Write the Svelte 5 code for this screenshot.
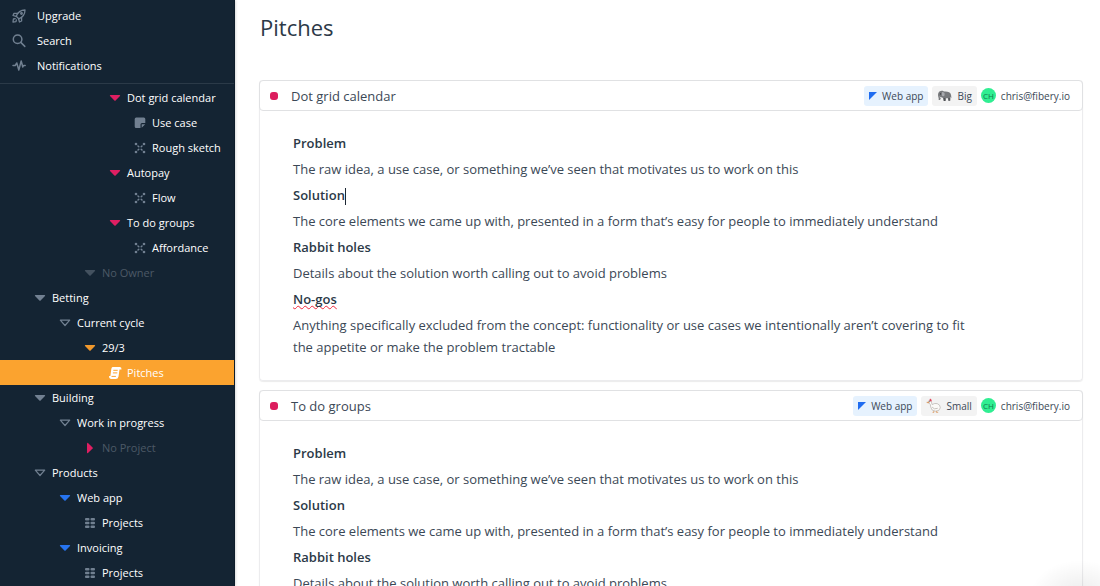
<script>
  const nav = [
    { icon: 'rocket', label: 'Upgrade' },
    { icon: 'search', label: 'Search' },
    { icon: 'pulse', label: 'Notifications' }
  ];

  const tree = [
    { depth: 4, icon: 'down', tone: 'pink', label: 'Dot grid calendar' },
    { depth: 5, icon: 'note', tone: 'grey', label: 'Use case' },
    { depth: 5, icon: 'board', tone: 'grey', label: 'Rough sketch' },
    { depth: 4, icon: 'down', tone: 'pink', label: 'Autopay' },
    { depth: 5, icon: 'board', tone: 'grey', label: 'Flow' },
    { depth: 4, icon: 'down', tone: 'pink', label: 'To do groups' },
    { depth: 5, icon: 'board', tone: 'grey', label: 'Affordance' },
    { depth: 3, icon: 'down', tone: 'dim', label: 'No Owner', muted: true },
    { depth: 1, icon: 'down', tone: 'grey', label: 'Betting' },
    { depth: 2, icon: 'outline', tone: 'grey', label: 'Current cycle' },
    { depth: 3, icon: 'down', tone: 'orange', label: '29/3' },
    { depth: 4, icon: 'scroll', tone: 'white', label: 'Pitches', active: true },
    { depth: 1, icon: 'down', tone: 'grey', label: 'Building' },
    { depth: 2, icon: 'outline', tone: 'grey', label: 'Work in progress' },
    { depth: 3, icon: 'right', tone: 'pink', label: 'No Project', muted: true },
    { depth: 1, icon: 'outline', tone: 'grey', label: 'Products' },
    { depth: 2, icon: 'down', tone: 'blue', label: 'Web app' },
    { depth: 3, icon: 'list', tone: 'grey', label: 'Projects' },
    { depth: 2, icon: 'down', tone: 'blue', label: 'Invoicing' },
    { depth: 3, icon: 'list', tone: 'grey', label: 'Projects' }
  ];

  const sections = [
    ['Problem', 'The raw idea, a use case, or something we’ve seen that motivates us to work on this'],
    ['Solution', 'The core elements we came up with, presented in a form that’s easy for people to immediately understand'],
    ['Rabbit holes', 'Details about the solution worth calling out to avoid problems'],
    ['No-gos', 'Anything specifically excluded from the concept: functionality or use cases we intentionally aren’t covering to fit the appetite or make the problem tractable']
  ];

  const pitches = [
    { title: 'Dot grid calendar', size: 'Big', editing: true },
    { title: 'To do groups', size: 'Small', editing: false }
  ];
</script>

{#snippet glyph(name)}
  <svg class="glyph" viewBox="0 0 14 14" aria-hidden="true">
    {#if name === 'rocket'}
      <g fill="none" stroke="currentColor" stroke-width="1.3" stroke-linejoin="round" stroke-linecap="round">
        <path d="M4.200 7.200C5.600 3.600 8.600 1 13 1c0 4.400-2.600 7.400-6.200 8.800z" />
        <path d="M5.700 4.400H2L1 6.500l3 .9M9.600 8.300V12L7.500 13l-.9-3" />
        <path d="M3.200 9.600 1.400 10 1 13l3-.4.400-1.800" />
        <circle cx="9.500" cy="4.500" r=".8" />
      </g>
    {:else if name === 'search'}
      <g fill="none" stroke="currentColor" stroke-width="1.500" stroke-linecap="round">
        <circle cx="5.600" cy="5.200" r="4.300" />
        <path d="m8.800 8.400 4 4" />
      </g>
    {:else if name === 'pulse'}
      <path d="M1 6.500h2.200l1.600-2.500 2 7 2.400-9 1.600 6 .8-1.500h1.600" fill="none" stroke="currentColor" stroke-width="1.500" stroke-linejoin="round" stroke-linecap="round" />
    {:else if name === 'down'}
      <path d="M2.300 4h9.400q.8.300.3 1L7.600 9.600q-.6.500-1.200 0L2 5q-.5-.7.300-1z" fill="currentColor" />
    {:else if name === 'outline'}
      <path d="M2.300 4.200h9.400L7 9.500z" fill="none" stroke="currentColor" stroke-width="1.200" stroke-linejoin="round" />
    {:else if name === 'right'}
      <path d="M4 2.300q.2-.8 1-.3l4.600 4.400q.5.600 0 1.200L5 12q-.8.500-1-.3z" fill="currentColor" />
    {:else if name === 'note'}
      <path d="M3.200 1.500h7.600A1.500 1.500 0 0 1 12.300 3v4H9A1.500 1.500 0 0 0 7.500 8.500V12H3.200a1.500 1.500 0 0 1-1.500-1.500V3a1.500 1.500 0 0 1 1.500-1.500z" fill="currentColor" />
      <path d="M8.700 8.300h3.500l-3.500 3.500z" fill="currentColor" />
    {:else if name === 'board'}
      <g stroke="currentColor" stroke-width="1.500" stroke-linecap="round">
        <path d="m5 5 .8.800M9 5l-.8.800M5 9l.8-.8M9 9l-.8-.8" />
      </g>
      <g fill="currentColor">
        <circle cx="3" cy="3" r="1.300" /><circle cx="11" cy="3" r="1.300" />
        <circle cx="3" cy="11" r="1.300" /><circle cx="11" cy="11" r="1.300" />
      </g>
    {:else if name === 'list'}
      <g fill="currentColor">
        <rect x="2" y="2" width="4.500" height="2.400" rx="1" /><rect x="7.500" y="2" width="4.500" height="2.400" rx="1" />
        <rect x="2" y="5.800" width="4.500" height="2.400" rx="1" /><rect x="7.500" y="5.800" width="4.500" height="2.400" rx="1" />
        <rect x="2" y="9.600" width="4.500" height="2.400" rx="1" /><rect x="7.500" y="9.600" width="4.500" height="2.400" rx="1" />
      </g>
    {:else if name === 'scroll'}
      <path d="M4.500 1H12q1.700.2 1.500 2.500h-2L10.500 10.500Q10 13 7.800 13h-5Q.8 12.700 1 10h1.400L3.300 3Q3.500 1.500 4.500 1z" fill="currentColor" />
      <path d="M5.300 4.300h4.400M4.900 6.900h4.400M3.500 10.400h4.400" fill="none" stroke="#fba32f" stroke-width="1" />
    {/if}
  </svg>
{/snippet}

<div class="app">
  <aside>
    <nav class="top" aria-label="Main">
      {#each nav as item}
        <a class="row" href="#{item.icon}">{@render glyph(item.icon)}<span>{item.label}</span></a>
      {/each}
    </nav>
    <nav class="tree" aria-label="Workspace">
      {#each tree as item}
        <a class="row d{item.depth} {item.tone}" class:muted={item.muted} class:active={item.active} href="#{item.icon}">
          {@render glyph(item.icon)}<span>{item.label}</span>
        </a>
      {/each}
    </nav>
  </aside>

  <main>
    <h1>Pitches</h1>
    {#each pitches as pitch}
      <article>
        <header>
          <span class="dot"></span>
          <h2>{pitch.title}</h2>
          <span class="tag web">
            <svg class="mark" viewBox="0 0 8 8" aria-hidden="true"><path d="M0 0h8L0 8z" fill="#1f6cf0" /></svg>
            Web app
          </span>
          <span class="tag size">
            {#if pitch.size === 'Big'}
              <svg class="animal" viewBox="0 0 16 16" aria-hidden="true">
                <path d="M1.300 9C.6 5.500 2 3.200 5 3c1.500 0 2.300.8 4 .8 3 0 5.500.9 6 3.700l.4 3.300-1-1.500-.2 4.300h-2.200l-.3-2.800H9.700l-.3 3H7l-.6-3.200-1.500-.8c-.8.300-1 1.300-1.600 3H1.800c.2-1.200 0-2.500-.5-3.800z" fill="#77797c" />
                <path d="M5.300 4.200c2.200 0 3.300 1.300 2.800 3.300-.4 1.500-1.900 1.700-2.900.6z" fill="#a8aaae" />
                <path d="M12.500 13.600l-.2-3h1.200v3zM7.500 13.800l-.4-3.200h1.300v3.200z" fill="#4a4c50" />
                <path d="M2.700 8.800 5 10.900 3.200 10.400z" fill="#fff" />
                <circle cx="3.700" cy="6.300" r=".7" fill="#303236" />
              </svg>
            {:else}
              <svg class="animal" viewBox="0 0 16 16" aria-hidden="true">
                <path d="M2.500 3.200Q4.800 2 5.800 4.500L6.500 7q3-1.800 5.500-1 3.200 1 3.300 4.500-.8 3.800-5.300 3.500-4.500-.2-5-4.500Q5 6.500 3.400 5.500z" fill="#fbfaf8" stroke="#b9b5b1" stroke-width=".8" />
                <path d="M6.500 9.700q2 3 6 1.300" fill="none" stroke="#c3bfba" />
                <path d="M3.500 3 4.300.6l1.200 1 .9 2.200z" fill="#e04458" />
                <path d="M3 4.300.8 4.700 3 5.400zM8.500 14v1.300H7M11 14v1.300h2" fill="#ecae69" stroke="#d6935b" stroke-width=".7" />
                <circle cx="4" cy="3.800" r=".5" fill="#333" />
              </svg>
            {/if}
            {pitch.size}
          </span>
          <span class="avatar">CH</span>
          <span class="mail">chris@fibery.io</span>
        </header>
        <div class="doc">
          {#each sections as [heading, text]}
            <h3>
              <span class:misspelt={pitch.editing && heading === 'No-gos'}>{heading}</span>{#if pitch.editing && heading === 'Solution'}<i class="caret"></i>{/if}
            </h3>
            <p>{text}</p>
          {/each}
        </div>
      </article>
    {/each}
  </main>
  <div class="glow"></div>
</div>

<style>
  :global(body) {
    margin: 0;
    background: #fff;
  }
  .app {
    display: flex;
    height: 100vh;
    overflow: hidden;
    position: relative;
    font-family: 'Open Sans', 'Noto Sans', sans-serif;
    color: #3b4856;
  }
  aside {
    flex: 0 0 234px;
    overflow: hidden;
    background: #142433;
    border-right: 1px solid #0e1d2b;
    box-shadow: 0 0 3px rgba(0, 0, 0, 0.25);
  }
  .top {
    padding: 3px 0 5px;
    border-bottom: 1px solid #2b3a48;
  }
  .top .row {
    gap: 11px;
    padding-left: 12px;
  }
  .tree {
    padding-top: 1px;
  }
  .row {
    display: flex;
    align-items: center;
    gap: 5px;
    height: 25px;
    color: #fff;
    font-size: 11px;
    line-height: 25px;
    text-decoration: none;
    white-space: nowrap;
  }
  .glyph {
    flex: none;
    width: 14px;
    height: 14px;
    color: #718091;
  }
  .d1 { padding-left: 33px; }
  .d2 { padding-left: 58px; }
  .d3 { padding-left: 83px; }
  .d4 { padding-left: 108px; }
  .d5 { padding-left: 133px; }
  .pink .glyph { color: #df1f62; }
  .blue .glyph { color: #2674f0; }
  .orange .glyph { color: #f0982c; }
  .white .glyph { color: #fff; }
  .dim .glyph { color: #43515f; }
  .muted { color: #4c5966; }
  .active { background: #fba32f; }

  main {
    flex: 1;
    min-width: 0;
    padding: 11px 18px 0 25px;
  }
  h1, h2, h3, p { margin: 0; }
  h1 {
    margin-bottom: 37px;
    font-size: 22px;
    font-weight: 400;
    line-height: 32px;
    color: #2c3947;
  }
  article {
    margin: 0 -1px 9px;
    border: 1px solid #ececee;
    border-top: 0;
    border-radius: 4px;
    box-shadow: 0 1px 1px rgba(0, 0, 0, 0.08);
  }
  header {
    display: flex;
    align-items: center;
    height: 29px;
    margin: 0 -1px;
    padding: 0 12px 0 10px;
    border: 1px solid #e0e1e3;
    border-radius: 4px;
    font-size: 10px;
  }
  .dot {
    width: 8px;
    height: 8px;
    border-radius: 3px;
    background: #dc1d5e;
  }
  h2 {
    flex: 1;
    margin-left: 13px;
    font-size: 13px;
    font-weight: 400;
  }
  .tag {
    display: flex;
    align-items: center;
    gap: 5px;
    height: 20px;
    margin-right: 4px;
    padding: 0 5px;
    border-radius: 3px;
    white-space: nowrap;
  }
  .web { background: #e6f2fe; }
  .size { background: #f3f3f3; }
  .mark { width: 8px; height: 8px; }
  .animal { width: 15px; height: 15px; }
  .avatar {
    width: 15px;
    height: 15px;
    border-radius: 50%;
    background: #30ee92;
    color: #16774c;
    font-size: 8px;
    line-height: 15px;
    text-align: center;
  }
  .mail { margin-left: 5px; }
  .doc {
    max-width: 680px;
    padding: 21px 33px 18px;
    font-size: 13px;
    line-height: 22px;
  }
  h3 {
    margin-bottom: 4px;
    font-size: 13px;
    font-weight: 600;
    color: #2b3947;
  }
  p { margin-bottom: 4px; }
  .misspelt {
    text-decoration: underline wavy #f0283c 1px;
    text-decoration-skip-ink: none;
  }
  .caret {
    display: inline-block;
    width: 1px;
    height: 17px;
    vertical-align: middle;
    background: #1c2733;
  }
  .glow {
    position: absolute;
    right: -30px;
    bottom: -46px;
    width: 100px;
    height: 72px;
    background: radial-gradient(closest-side, rgba(0, 0, 0, 0.08), transparent);
    pointer-events: none;
  }
</style>
